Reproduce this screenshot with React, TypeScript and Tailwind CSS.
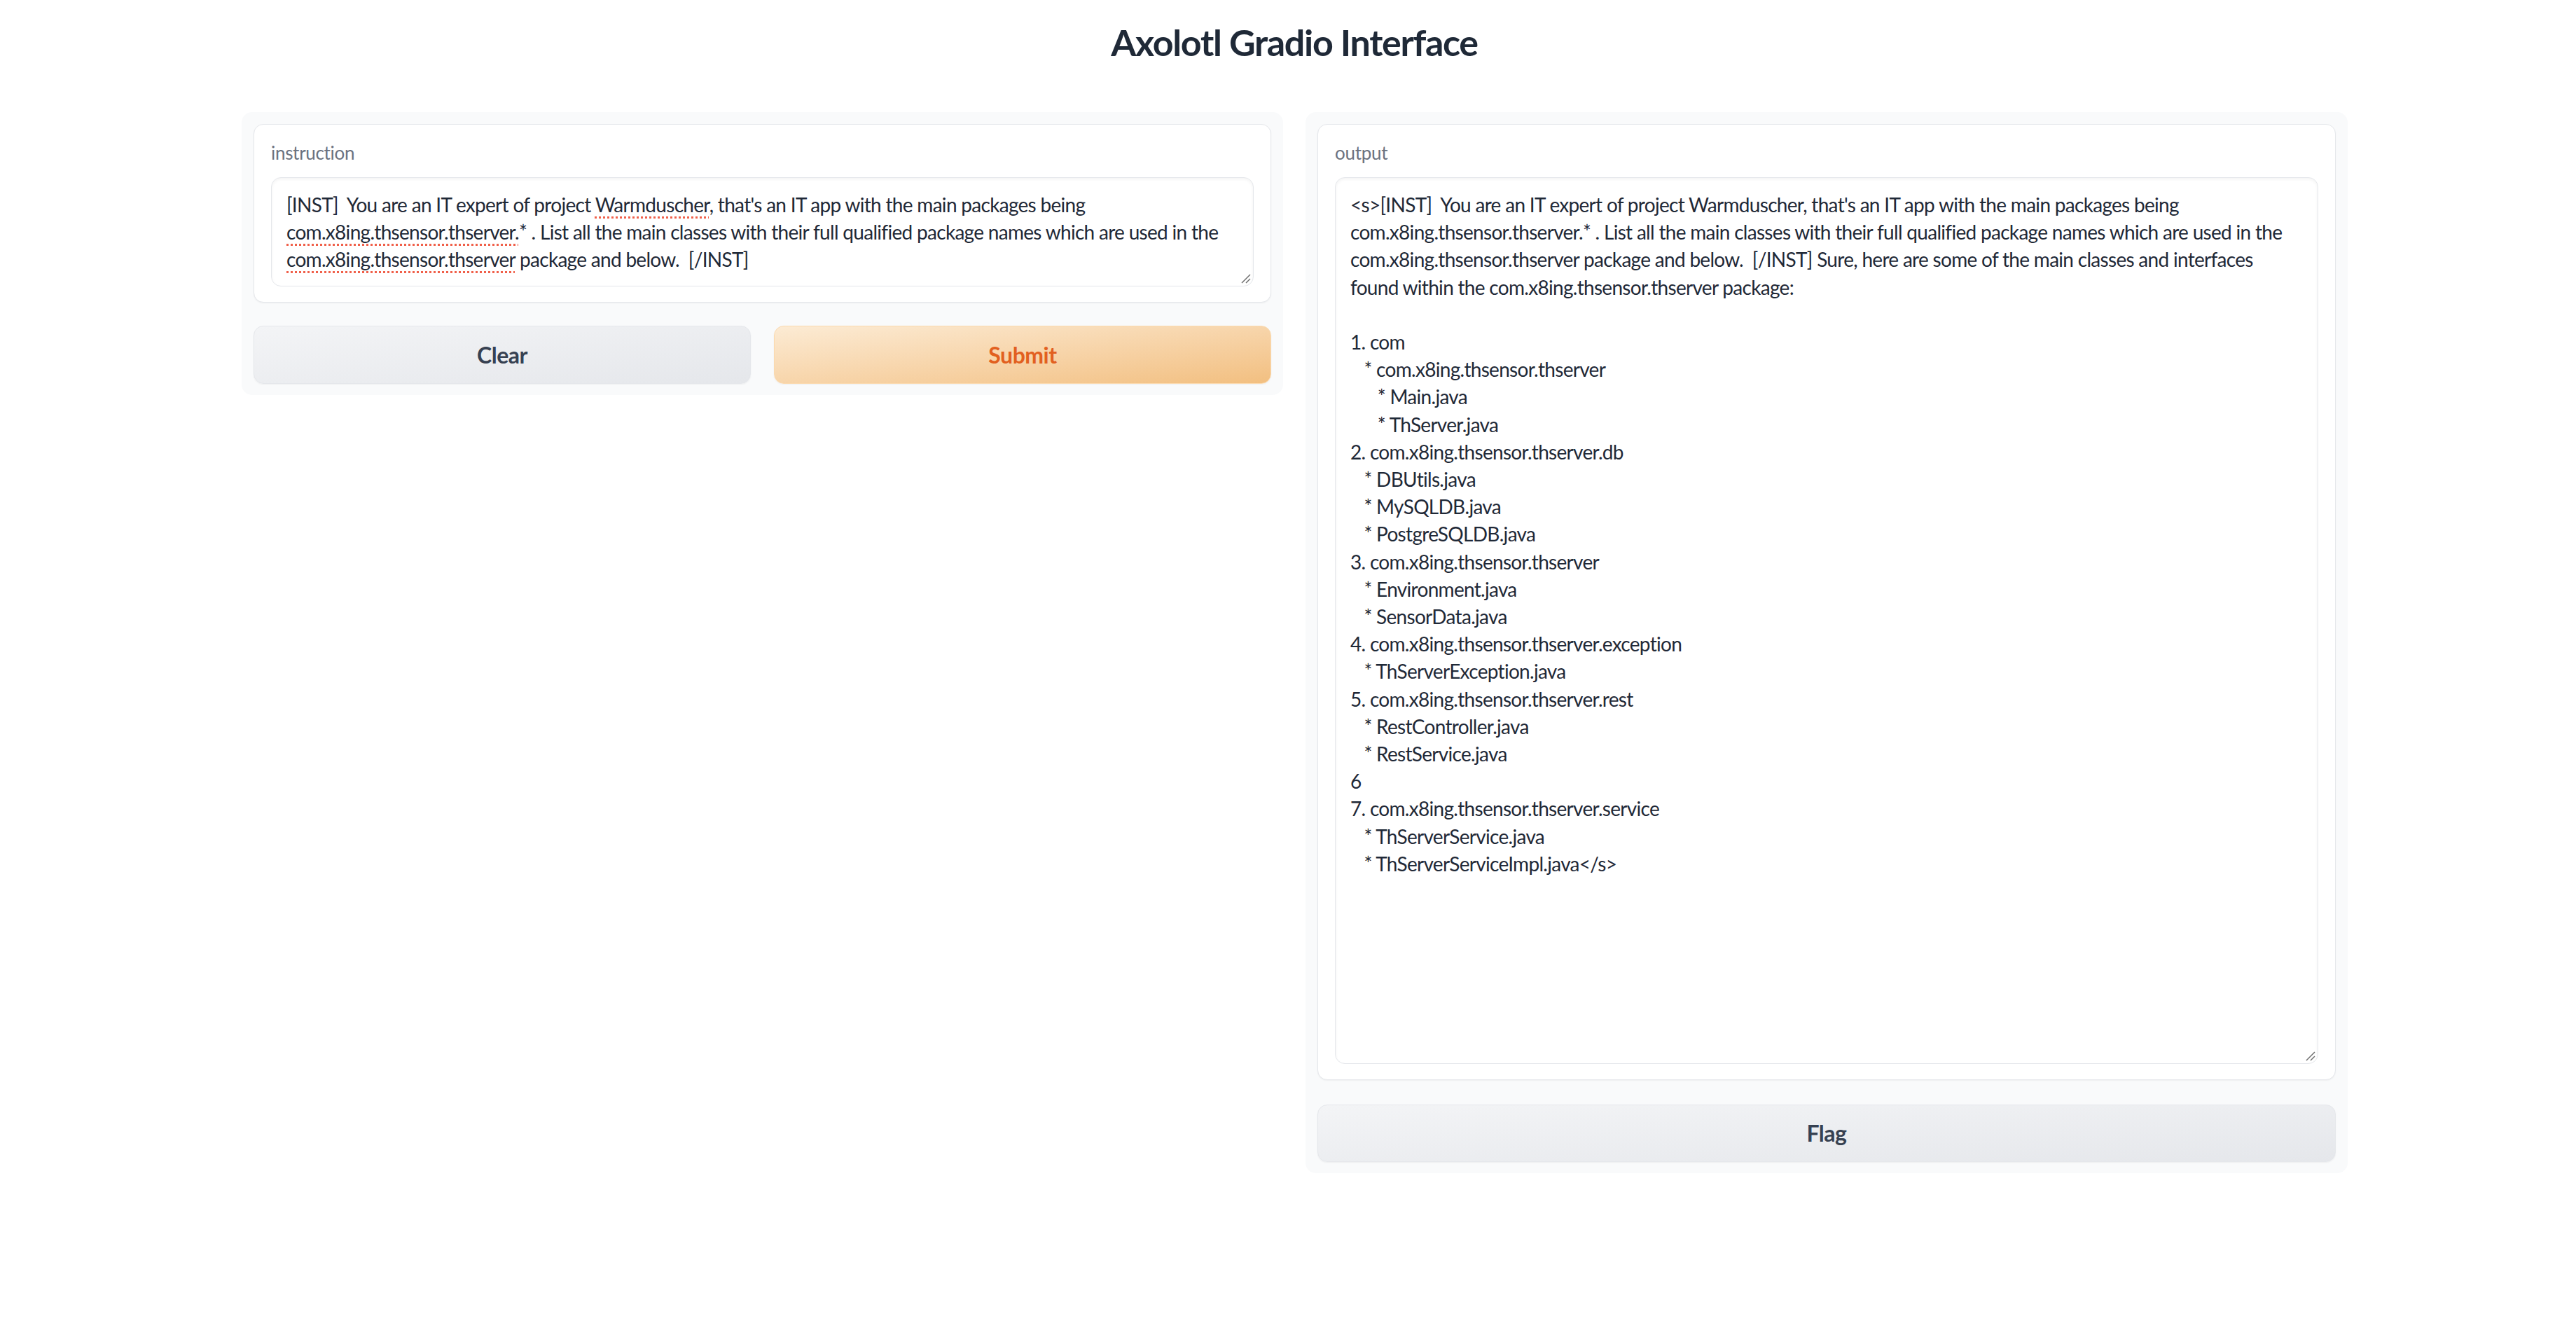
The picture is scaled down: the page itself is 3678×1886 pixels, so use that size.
import React from 'react'

const output = `<s>[INST]  You are an IT expert of project Warmduscher, that's an IT app with the main packages being
com.x8ing.thsensor.thserver.* . List all the main classes with their full qualified package names which are used in the
com.x8ing.thsensor.thserver package and below.  [/INST] Sure, here are some of the main classes and interfaces
found within the com.x8ing.thsensor.thserver package:
 
1. com
   * com.x8ing.thsensor.thserver
      * Main.java
      * ThServer.java
2. com.x8ing.thsensor.thserver.db
   * DBUtils.java
   * MySQLDB.java
   * PostgreSQLDB.java
3. com.x8ing.thsensor.thserver
   * Environment.java
   * SensorData.java
4. com.x8ing.thsensor.thserver.exception
   * ThServerException.java
5. com.x8ing.thsensor.thserver.rest
   * RestController.java
   * RestService.java
6
7. com.x8ing.thsensor.thserver.service
   * ThServerService.java
   * ThServerServiceImpl.java</s>`

// red dotted marks, as the browser's spell check draws them
const Typo = ({ children }: { children: React.ReactNode }) => (
  <span className="underline decoration-dotted decoration-[#f0604a] decoration-[2.5px] underline-offset-[6px]">{children}</span>
)

const Grip = () => (
  <svg className="absolute right-[3px] bottom-[3px]" width="14" height="14" viewBox="0 0 14 14">
    <path d="M13 1 L1 13 M13 7 L7 13" stroke="#6f6f6f" strokeWidth="1.5" />
  </svg>
)

function Block({ label, children, areaClass }: { label: string; children: React.ReactNode; areaClass: string }) {
  return (
    <div className="rounded-[14px] border border-[#e5e7eb] bg-white px-[24px] pt-[22px] pb-[22px] shadow-[0_1px_2px_rgba(0,0,0,0.05)]">
      <div className="mb-[17px] text-[26px] leading-[36px] tracking-[-0.3px] text-[#6b7280]">{label}</div>
      <div
        className={`relative overflow-hidden rounded-[14px] border border-[#e5e7eb] bg-white px-[21px] pt-[19px] text-[28px] leading-[39.2px] tracking-[-0.7px] text-[#1f2937] shadow-[inset_0_2px_4px_rgba(0,0,0,0.05)] ${areaClass}`}
      >
        {children}
        <Grip />
      </div>
    </div>
  )
}

export default function App() {
  return (
    <div className="min-h-screen bg-white font-['Lato',sans-serif] text-[#1f2937]">
      <h1 className="pt-[29px] pl-[18px] text-center text-[52px] font-bold leading-[62px] tracking-[-1.3px]">Axolotl Gradio Interface</h1>

      <div className="mt-[69px] flex items-start gap-[32px] pl-[345px]">
        {/* inputs */}
        <div className="w-[1487px] rounded-[15px] bg-[#f9fafb] px-[17px] pt-[17px] pb-[16px]">
          <Block label="instruction" areaClass="h-[156px] whitespace-pre">
            {'[INST]  You are an IT expert of project '}<Typo>Warmduscher</Typo>{", that's an IT app with the main packages being\n"}
            <Typo>com.x8ing.thsensor.thserver.</Typo>{'* . List all the main classes with their full qualified package names which are used in the\n'}
            <Typo>com.x8ing.thsensor.thserver</Typo>{' package and below.  [/INST]'}
          </Block>

          <div className="mt-[33px] flex gap-[33px]">
            <button className="h-[83px] flex-1 rounded-[14px] border border-[#e5e7eb] bg-gradient-to-br from-[#f3f4f6] to-[#e5e7eb] text-[32px] font-bold tracking-[-0.5px] text-[#374151] shadow-[0_1px_2px_rgba(0,0,0,0.05)]">
              Clear
            </button>
            <button className="h-[83px] flex-1 rounded-[14px] border border-[#fbd9ae] bg-gradient-to-br from-[#fcebd4] to-[#f2bf80] text-[32px] font-bold tracking-[-0.5px] text-[#e2601f] shadow-[0_1px_2px_rgba(0,0,0,0.05)]">
              Submit
            </button>
          </div>
        </div>

        {/* outputs */}
        <div className="w-[1488px] rounded-[15px] bg-[#f9fafb] px-[17px] pt-[17px] pb-[16px]">
          <Block label="output" areaClass="h-[1266px] whitespace-pre">
            {output}
          </Block>

          <button className="mt-[35px] h-[82px] w-full rounded-[14px] border border-[#e5e7eb] bg-gradient-to-br from-[#f3f4f6] to-[#e5e7eb] text-[32px] font-bold tracking-[-0.5px] text-[#374151] shadow-[0_1px_2px_rgba(0,0,0,0.05)]">
            Flag
          </button>
        </div>
      </div>
    </div>
  )
}
